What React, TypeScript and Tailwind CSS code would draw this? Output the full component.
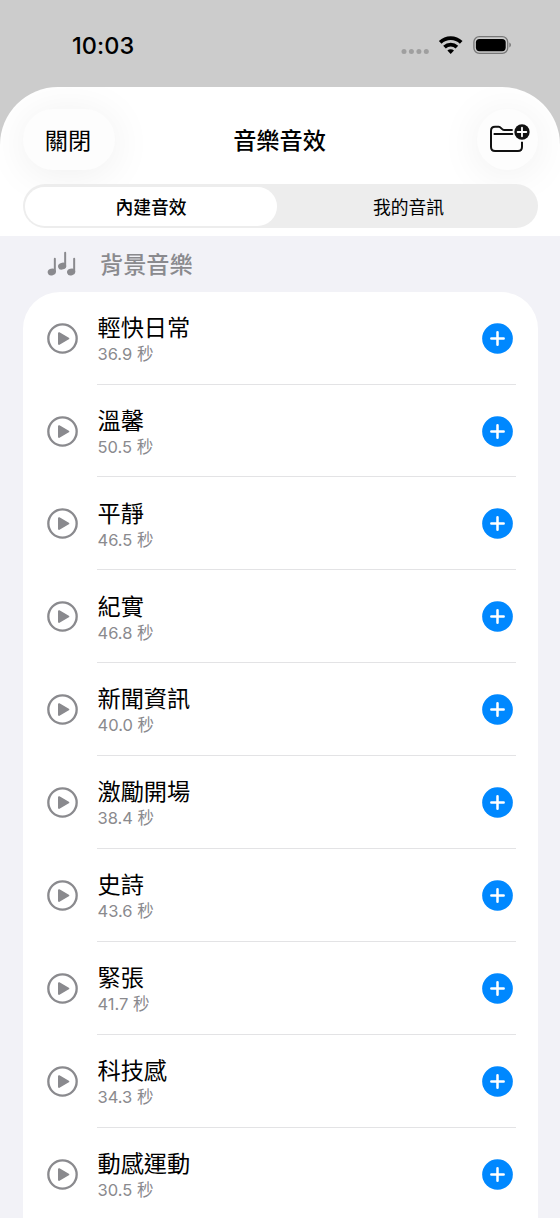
interface Track {
  name: string;
  duration: string;
}

const tracks: Track[] = [
  { name: '輕快日常', duration: '36.9' },
  { name: '溫馨', duration: '50.5' },
  { name: '平靜', duration: '46.5' },
  { name: '紀實', duration: '46.8' },
  { name: '新聞資訊', duration: '40.0' },
  { name: '激勵開場', duration: '38.4' },
  { name: '史詩', duration: '43.6' },
  { name: '緊張', duration: '41.7' },
  { name: '科技感', duration: '34.3' },
  { name: '動感運動', duration: '30.5' },
];

function StatusBar() {
  return (
    <div className="h-[86.5px] flex items-start justify-between pl-[72px] pr-[49px]">
      <span className="mt-[32px] text-[23.5px] leading-[28px] font-[550] tracking-[0.1px]">10:03</span>
      <svg className="mt-[34px]" width="110" height="24" viewBox="0 0 110 24">
        <g fill="#9f9f9f">
          <circle cx="3" cy="17.4" r="2.5" />
          <circle cx="10.4" cy="17.4" r="2.5" />
          <circle cx="17.9" cy="17.4" r="2.5" />
          <circle cx="25.3" cy="17.4" r="2.5" />
        </g>
        <g fill="none" stroke="#000" strokeWidth="3.8">
          <path d="M39.2 8.4a15.2 15.2 0 0 1 21 0" />
          <path d="M43.5 13.2a9 9 0 0 1 12.4 0" />
        </g>
        <path d="M49.7 20l-3.3-3.4a4.6 4.6 0 0 1 6.6 0z" fill="#000" />
        <rect x="72.9" y="2.7" width="33.8" height="16.6" rx="5.4" fill="none" stroke="#777" strokeWidth="1.3" />
        <rect x="74.9" y="4.9" width="29.8" height="12.3" rx="3.6" fill="#000" />
        <path d="M108.3 8.6c2.2 1 2.2 3.8 0 4.8z" fill="#777" />
      </svg>
    </div>
  );
}

function FolderPlusIcon() {
  return (
    <svg width="44" height="33.3" viewBox="24 22 132 100" fill="none" className="ml-[6px] shrink-0">
      <path
        d="M98 46H72c-7 0-9-10-16-10H45c-8 0-12 4-12 12v49c0 8 4 12 12 12h69c8 0 12-4 12-12V81"
        stroke="#111"
        strokeWidth="6"
      />
      <path d="M43 58h54" stroke="#111" strokeWidth="5.5" strokeLinecap="round" />
      <circle cx="126" cy="52" r="23" fill="#111" />
      <path d="M126 39v26M113 52h26" stroke="#fff" strokeWidth="5.5" strokeLinecap="round" />
    </svg>
  );
}

function NotesIcon() {
  return (
    <svg width="29" height="25" viewBox="20 18 87 75" fill="#8a8a8e">
      <ellipse cx="34.5" cy="81" rx="12.5" ry="10" transform="rotate(-18 34.5 81)" />
      <ellipse cx="65.5" cy="63.5" rx="12.5" ry="10" transform="rotate(-18 65.5 63.5)" />
      <ellipse cx="92.5" cy="81" rx="12.5" ry="10" transform="rotate(-18 92.5 81)" />
      <path d="M43.5 79V41M74.500 61V23M101.500 79V41" stroke="#8a8a8e" strokeWidth="6" strokeLinecap="round" />
    </svg>
  );
}

function PlayIcon() {
  return (
    <svg className="shrink-0" width="31" height="31" viewBox="0 0 93 93">
      <circle cx="46.5" cy="46.5" r="42.5" fill="none" stroke="#8a8a8e" strokeWidth="7" />
      <path d="M36 30.5l28 16-28 16z" fill="#8a8a8e" stroke="#8a8a8e" strokeWidth="6" strokeLinejoin="round" />
    </svg>
  );
}

function AddIcon() {
  return (
    <svg className="shrink-0 mt-px" width="31" height="31" viewBox="0 0 93 93">
      <circle cx="46.5" cy="46.5" r="46" fill="#0088ff" />
      <path d="M46.5 28v37M28 46.5h37" stroke="#fff" strokeWidth="7.5" strokeLinecap="round" />
    </svg>
  );
}

function Header() {
  return (
    <div className="h-[149.5px] bg-white rounded-t-[58px] px-[22.5px] pt-[22px] overflow-hidden">
      <div className="grid grid-cols-[1fr_auto_1fr] items-center h-[61px]">
        <button className="w-[92px] h-[61px] pt-[4px] pr-px rounded-full bg-[#fdfdfd] text-[23.2px] shadow-[0_4px_44px_rgba(0,0,0,0.07)]">
          關閉
        </button>
        <h1 className="pt-[5px] -ml-px text-[23.2px] font-medium">音樂音效</h1>
        <button className="justify-self-end w-[61px] h-[61px] rounded-full bg-[#fdfdfd] flex items-center justify-center shadow-[0_4px_44px_rgba(0,0,0,0.07)]">
          <FolderPlusIcon />
        </button>
      </div>
      <div className="relative mt-[14.5px] h-[44px] rounded-full bg-[#ededed] p-[2.5px] grid grid-cols-[252px_1fr] text-[17.8px]">
        <button className="pt-[4px] rounded-full bg-white font-medium">內建音效</button>
        <button className="pt-[4px] pl-[5px]">我的音訊</button>
      </div>
    </div>
  );
}

function TrackRow({ track, last }: { track: Track; last: boolean }) {
  return (
    <li className="h-[92.9px] flex items-center pl-[24px]">
      <PlayIcon />
      <div
        className={`ml-[19.5px] mr-[22px] flex-1 h-full flex items-center justify-between pr-[3px] ${
          last ? '' : 'border-b border-[#e3e3e5]'
        }`}
      >
        <div className="flex flex-col pt-[4.5px] pl-[0.5px]">
          <span className="text-[23.2px] leading-[29px]">{track.name}</span>
          <span className="text-[16.5px] leading-[23px] font-[370] text-[#8a8a8e]">{track.duration} 秒</span>
        </div>
        <AddIcon />
      </div>
    </li>
  );
}

export default function App() {
  return (
    <div
      lang="zh-Hant"
      className="w-[560px] h-[1218px] overflow-hidden bg-[#cccccc] text-black font-[Inter,'Noto_Sans_CJK_TC',sans-serif]"
    >
      <StatusBar />
      <Header />
      <div className="bg-[#f2f2f7] px-[22.5px]">
        <div className="h-[55.7px] flex items-center gap-[24.5px] pl-[24px] text-[#8a8a8e]">
          <NotesIcon />
          <h2 className="pt-[3px] text-[23.2px] font-medium">背景音樂</h2>
        </div>
        <ul className="bg-white rounded-t-[37px]">
          {tracks.map((track, i) => (
            <TrackRow key={track.name} track={track} last={i === tracks.length - 1} />
          ))}
        </ul>
      </div>
    </div>
  );
}
